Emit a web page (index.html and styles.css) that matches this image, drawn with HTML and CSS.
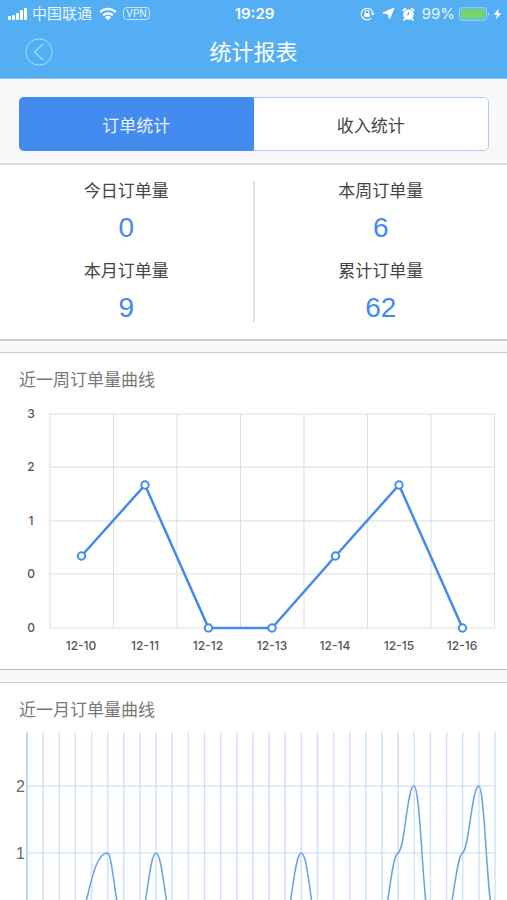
FILE: index.html
```
<!DOCTYPE html>
<html lang="zh-CN">
<head>
<meta charset="utf-8">
<meta name="viewport" content="width=device-width, initial-scale=1">
<title>统计报表</title>
<link rel="stylesheet" href="styles.css">
</head>
<body>
<header class="header">
  <div class="status">
    <div class="status-side">
      <svg class="icon" width="21" height="14" viewBox="0 0 21 14" aria-hidden="true"><g fill="currentColor"><rect x="1" y="9" width="3" height="4" rx="1"/><rect x="5" y="8" width="3" height="5" rx="1"/><rect x="9" y="6" width="3" height="7" rx="1"/><rect x="13" y="3" width="3" height="10" rx="1"/><rect x="17" y="1" width="3" height="12" rx="1"/></g></svg>
      <span class="carrier">中国联通</span>
      <svg class="icon wifi" width="18" height="14" viewBox="0 0 18 14" aria-hidden="true"><g fill="none" stroke="currentColor" stroke-width="2.2"><path d="M1.2 5.2a11 11 0 0 1 15.6 0"/><path d="M4.1 8.3a7 7 0 0 1 9.8 0"/></g><path d="M9 13.3 6 10.3a4.3 4.3 0 0 1 6 0z" fill="currentColor"/></svg>
      <span class="vpn">VPN</span>
    </div>
    <time class="clock">19:29</time>
    <div class="status-side status-right">
      <svg class="icon lock" width="15" height="14" viewBox="0 0 15 14" aria-hidden="true"><g fill="none" stroke="currentColor"><path d="M11.2 11.2A5.8 5.8 0 1 1 12.8 6" stroke-width="1.2"/><path d="M5.3 6.5V5a1.7 1.7 0 0 1 3.4 0v1.5" stroke-width="1.1"/></g><rect x="4.3" y="6.3" width="5.4" height="3.8" rx=".6" fill="currentColor"/><path d="M10.8 6h3.8l-1.9 2.8z" fill="currentColor"/></svg>
      <svg class="icon arrow" width="13" height="13" viewBox="0 0 13 13" aria-hidden="true"><path d="M12 1 7.4 12 6.3 6.8 1 6z" fill="currentColor" stroke="currentColor" stroke-linejoin="round"/></svg>
      <svg class="icon alarm" width="13" height="14" viewBox="0 0 13 14" aria-hidden="true"><circle cx="6.5" cy="7.5" r="5.3" fill="currentColor"/><path d="M1.2 3.4 3.2 1.6M11.8 3.4 9.800 1.6M3 12l-1 1M10 12l1 1" stroke="currentColor" stroke-width="1.7" stroke-linecap="round"/><path d="M6.500 4.800v3H4.500" fill="none" stroke="#54aef4"/></svg>
      <span>99%</span>
      <svg class="icon battery" width="33" height="14" viewBox="0 0 33 14" aria-hidden="true"><rect x=".5" y=".8" width="27" height="12.4" rx="2.5" fill="none" stroke="#a5d8f8"/><rect x="2" y="2.3" width="24" height="9.4" rx="1" fill="#74d66a"/><path d="M29 5q3 2 0 4z" fill="#a5d8f8"/></svg>
      <svg class="icon bolt" width="9" height="12" viewBox="0 0 9 12" aria-hidden="true"><path d="M5.8.5.7 6.7h3.2L3 11.5l5.3-6.3H5z" fill="currentColor"/></svg>
    </div>
  </div>
  <div class="nav">
    <button class="back" type="button" aria-label="返回"><svg width="28" height="28" viewBox="0 0 28 28" fill="none" stroke="currentColor" aria-hidden="true"><circle cx="14" cy="14" r="13.2"/><path d="M18 6 9.5 14 18 22" stroke-width="1.2"/></svg></button>
    <h1>统计报表</h1>
  </div>
</header>
<main>
  <nav class="tabs">
    <div class="segmented">
      <button class="tab tab-active" type="button">订单统计</button>
      <button class="tab" type="button">收入统计</button>
    </div>
  </nav>
  <section class="stats">
    <dl class="stat-column">
      <div class="stat"><dt>今日订单量</dt><dd>0</dd></div>
      <div class="stat"><dt>本月订单量</dt><dd>9</dd></div>
    </dl>
    <dl class="stat-column">
      <div class="stat"><dt>本周订单量</dt><dd>6</dd></div>
      <div class="stat"><dt>累计订单量</dt><dd>62</dd></div>
    </dl>
  </section>
  <section class="card">
    <h2>近一周订单量曲线</h2>
    <svg class="chart" viewBox="0 0 507 276" role="img" aria-label="近一周订单量曲线">
      <path class="grid" d="M49 21H495M49 74H495M49 128H495M49 181H495M49 235H495M50 21V235M113.5 21V235M177 21V235M240.5 21V235M304 21V235M367.5 21V235M431 21V235M494.5 21V235"/>
      <g class="axis"><text x="31" y="25">3</text><text x="31" y="78">2</text><text x="31" y="132">1</text><text x="31" y="185">0</text><text x="31" y="239">0</text>
      <text x="81" y="257">12-10</text><text x="145" y="257">12-11</text><text x="208" y="257">12-12</text><text x="272" y="257">12-13</text><text x="335" y="257">12-14</text><text x="399" y="257">12-15</text><text x="462" y="257">12-16</text></g>
      <path class="week-line" d="M81.5 163 145 92 208.5 235H272L335.5 163 399 92 462.5 235"/>
      <g class="dots"><circle cx="81.5" cy="163" r="3.7"/><circle cx="145" cy="92" r="3.7"/><circle cx="208.5" cy="235" r="3.7"/><circle cx="272" cy="235" r="3.7"/><circle cx="335.5" cy="163" r="3.7"/><circle cx="399" cy="92" r="3.7"/><circle cx="462.5" cy="235" r="3.7"/></g>
    </svg>
  </section>
  <section class="card card-last">
    <h2>近一月订单量曲线</h2>
    <svg class="chart" viewBox="0 0 507 177" role="img" aria-label="近一月订单量曲线">
      <path class="month-grid" d="M43.1 9V177M59.3 9V177M75.4 9V177M91.6 9V177M107.7 9V177M123.8 9V177M140 9V177M156.1 9V177M172.2 9V177M188.4 9V177M204.5 9V177M220.7 9V177M236.8 9V177M252.9 9V177M269.1 9V177M285.2 9V177M301.3 9V177M317.5 9V177M333.6 9V177M349.8 9V177M365.9 9V177M382 9V177M398.2 9V177M414.3 9V177M430.4 9V177M446.6 9V177M462.7 9V177M478.9 9V177M495 9V177"/>
      <path class="month-rows" d="M27 63H495M27 130H495"/>
      <path class="month-edge" d="M27 9V177"/>
      <g class="month-axis"><text x="25" y="69">2</text><text x="25" y="136">1</text></g>
      <path class="month-line" d="M81 197C90 169 94 130 107.5 130C113 130 116 197 123 197M140 197C146 197 149 130 156 130S166 197 172 197M285 197C291 197 294 130 301.3 130S311 197 317 197M382 197C388 197 391 133 398 130C405 127 407 63 414 63S423 197 430 197M446.6 197C452 197 456 133 462.5 130C469 127 472 63 478.7 63S487 197 495 197"/>
    </svg>
  </section>
</main>
</body>
</html>
```

FILE: styles.css
```
* { box-sizing: border-box; }
body {
  margin: 0;
  background: #f9f9f9;
  color: #444;
  font-family: "Liberation Sans", "Noto Sans CJK SC", sans-serif;
}
h1, h2, dl, dd { margin: 0; font-weight: 400; }
button { border: 0; padding: 0; background: none; font: inherit; color: inherit; }
svg { display: block; }

.header { height: 79px; background: #54aef4; color: #fff; border-bottom: 1px solid #8dcbf8; }
.status {
  height: 27px;
  padding: 0 5px 0 7px;
  display: grid;
  grid-template-columns: 1fr auto 1fr;
  align-items: center;
  font: 15px/27px Inter, "Noto Sans CJK SC", sans-serif;
}
.status-side { display: flex; align-items: center; color: #e9f7ff; }
.status-right { justify-content: flex-end; }
.icon { flex: none; color: #fff; }
.carrier { margin-left: 4px; }
.wifi { margin-left: 7px; }
.vpn {
  margin-left: 6px;
  padding: 0 2px;
  border: 1px solid #c3e5fc;
  border-radius: 4px;
  font-size: 10px;
  line-height: 11px;
}
.clock { font-weight: 600; }
.arrow { margin-left: 7px; }
.alarm { margin: 0 7px; }
.battery { margin-left: 4px; }
.bolt { margin-left: 1px; }
.nav {
  height: 50px;
  padding: 0 25px;
  display: grid;
  grid-template-columns: 28px 1fr 28px;
  align-items: center;
}
.back { color: #a8dcfb; }
h1 { padding-top: 2px; text-align: center; font-size: 22px; line-height: 32px; }

.tabs { padding: 18px 18px 12px 19px; border-bottom: 2px solid #ddd; }
.segmented {
  height: 54px;
  display: flex;
  border: 1px solid #acccf7;
  border-radius: 5px;
  background: #fff;
}
.tab { flex: 1; font-size: 17px; color: #444; }
.tab-active { margin: -1px 0 -1px -1px; border-radius: 5px 2px 2px 5px; background: #438bee; color: #e9f4ff; }

.stats {
  display: flex;
  padding: 16px 0 17px;
  background: #fff;
  border-bottom: 2px solid #ccc;
}
.stat-column { flex: 1; height: 141px; text-align: center; }
.stat-column + .stat-column { border-left: 2px solid #e3e3e3; }
.stat { height: 80px; }
dt { padding-top: 1px; font-size: 17px; line-height: 20px; }
dd { padding-top: 9px; color: #438bee; font-size: 28px; line-height: 34px; }

.card {
  margin-top: 11px;
  border-top: 1px solid #ccc;
  border-bottom: 1px solid #bbb;
  background: #fff;
}
.card + .card { margin-top: 12px; }
.card-last { border-bottom: 0; }
h2 { padding: 16px 19px 0; font-size: 17px; line-height: 24px; color: #777; }
.chart { width: 100%; height: auto; }
.grid { fill: none; stroke: #ddd; }
.axis { font: 500 12px Inter, sans-serif; fill: #555; text-anchor: middle; }
.week-line { fill: none; stroke: #438bee; stroke-width: 2.5px; }
.dots { fill: #fff; stroke: #438bee; stroke-width: 2px; }
.month-grid { fill: none; stroke: #d0e3fa; stroke-width: 1.5px; }
.month-rows { fill: none; stroke: #c3dbf6; }
.month-edge { stroke: #bcd8f8; stroke-width: 2px; }
.month-axis { font: 16px "Liberation Sans", sans-serif; fill: #666; text-anchor: end; }
.month-line { fill: none; stroke: #6ba2e8; stroke-width: 1.5px; }
```
